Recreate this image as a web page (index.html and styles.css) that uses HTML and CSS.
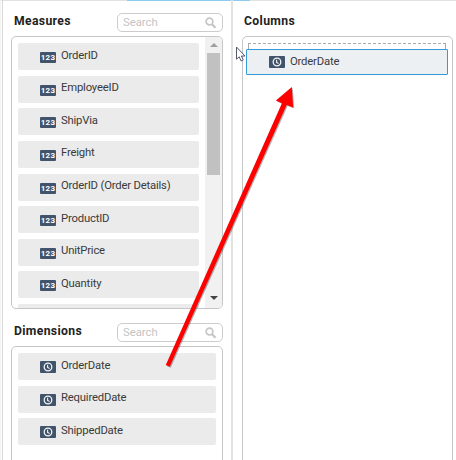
FILE: index.html
```html
<!DOCTYPE html>
<html lang="en">
<head>
<meta charset="utf-8">
<title>Data fields</title>
<link rel="stylesheet" href="styles.css">
</head>
<body>
<svg class="defs" aria-hidden="true">
  <symbol id="clock" viewBox="0 0 16 12">
    <rect width="16" height="12" rx="1" fill="#42536c"/>
    <circle cx="8" cy="6" r="3.8" fill="none" stroke="#f2f4f6" stroke-width="1.3"/>
    <path d="M7.6 3.8v2.6l2 1" fill="none" stroke="#f2f4f6" stroke-width="1.1"/>
  </symbol>
  <symbol id="search" viewBox="0 0 12 12">
    <circle cx="4.5" cy="4.5" r="3.4" fill="none" stroke="#c6c6c6" stroke-width="1.7"/>
    <path d="M7 7.2l3.5 3.6" stroke="#c6c6c6" stroke-width="2.2"/>
  </symbol>
</svg>
<main class="app">
  <section class="fields">
    <header class="head"><h2>Measures</h2><div class="search"><span>Search</span><svg><use href="#search"/></svg></div></header>
    <div class="box measures">
      <ul class="list">
        <li><b class="num">123</b><span>OrderID</span></li>
        <li><b class="num">123</b><span>EmployeeID</span></li>
        <li><b class="num">123</b><span>ShipVia</span></li>
        <li><b class="num">123</b><span>Freight</span></li>
        <li><b class="num">123</b><span>OrderID (Order Details)</span></li>
        <li><b class="num">123</b><span>ProductID</span></li>
        <li><b class="num">123</b><span>UnitPrice</span></li>
        <li><b class="num">123</b><span>Quantity</span></li>
        <li></li>
      </ul>
      <div class="scroll"><i class="up"></i><i class="thumb"></i><i class="down"></i></div>
    </div>
    <header class="head second"><h2>Dimensions</h2><div class="search"><span>Search</span><svg><use href="#search"/></svg></div></header>
    <div class="box dimensions">
      <ul class="list">
        <li><svg class="clock"><use href="#clock"/></svg><span>OrderDate</span></li>
        <li><svg class="clock"><use href="#clock"/></svg><span>RequiredDate</span></li>
        <li><svg class="clock"><use href="#clock"/></svg><span>ShippedDate</span></li>
      </ul>
    </div>
  </section>
  <section class="columns">
    <header class="head"><h2>Columns</h2></header>
    <div class="box target">
      <div class="slot"></div>
      <div class="drag"><svg class="clock"><use href="#clock"/></svg><span>OrderDate</span></div>
    </div>
  </section>
</main>
<svg class="overlay" viewBox="0 0 456 460">
  <path class="cursor" d="M236.5 47v12.2l2.7-2.4 1.9 4.2 2.2-1-1.9-4h3.6z"/>
  <path class="arrow" d="M165.8 364.9L281.9 103.3l-6-2.8L291.8 87l1.4 20.6-6.5-2.6L169.7 366.7z"/>
</svg>
</body>
</html>
```
FILE: styles.css
```css
* { box-sizing: border-box; }
body {
  margin: 0;
  width: 456px;
  height: 460px;
  overflow: hidden;
  background: #fff;
  color: #3a3a3a;
  font: 11.3px/16px Roboto, sans-serif;
}
.defs { position: absolute; width: 0; height: 0; }
.app {
  display: flex;
  height: 460px;
  border-left: 1px solid #f3f3f3;
  background: linear-gradient(90deg, #e2e2e2 126px, #8dccee 126px 249px, #e2e2e2 249px) 0 0 / 100% 1px no-repeat;
}
.fields {
  width: 231px;
  margin-left: 1px;
  padding: 13px 8px 0;
  border-left: 1px solid #d8d8d8;
  border-right: 2px solid #e2e2e2;
}
.columns { flex: 1; padding: 13px 3px 0 9px; }
.head { display: flex; justify-content: space-between; height: 19px; padding-left: 3px; }
h2 { margin: 0; font-size: 12.2px; line-height: 16px; font-weight: 700; color: #222; letter-spacing: .35px; }
.columns .head { padding-left: 2px; }
.search {
  display: flex;
  align-items: center;
  justify-content: space-between;
  width: 106px;
  height: 19px;
  padding: 0 5px;
  border: 1px solid #ccc;
  border-radius: 5px;
  color: #c4c4c4;
}
.search svg { width: 12px; height: 12px; }
.box { display: flex; margin-top: 4px; border: 1px solid #c6c6c6; border-radius: 5px; overflow: hidden; }
.measures { height: 273px; }
.second { margin-top: 14px; }
.dimensions { height: 130px; }
.list {
  flex: 1;
  display: grid;
  grid-auto-rows: 27px;
  align-content: start;
  gap: 5.65px;
  margin: 0;
  padding: 6px;
  list-style: none;
}
li { display: flex; padding: 0 0 0 22px; border-radius: 2px; background: #ebebeb; gap: 5px; }
li > span { padding-top: 4.5px; }
li > span, .drag span { letter-spacing: -.19px; }
.num {
  width: 16px;
  height: 11px;
  margin-top: 9px;
  border-radius: 1px;
  background: #42536c;
  color: #fff;
  font-size: 8px;
  line-height: 11px;
  text-align: center;
  letter-spacing: .2px;
}
.clock { width: 16px; height: 12px; }
li .clock { margin-top: 8px; }
.scroll { display: flex; flex-direction: column; align-items: center; width: 17px; background: #f1f1f1; }
.up, .down { border: 4px solid transparent; }
.up { margin-top: 2px; border-bottom-color: #a0a0a0; }
.thumb { width: 13px; height: 122px; margin-top: 6px; background: #c1c1c1; }
.down { margin-top: auto; margin-bottom: 4px; border-top-color: #444; }
.target { flex-direction: column; height: 430px; padding: 6px 4px 0 3px; }
.slot { height: 6px; margin: 0 2px; border: 1px dashed #aaa; border-bottom: 0; }
.drag {
  display: flex;
  align-items: center;
  gap: 5px;
  height: 26px;
  padding-left: 22px;
  border: 1px solid #3499db;
  border-radius: 1px;
  background: #ecf0f3;
}
.overlay { position: absolute; inset: 0; width: 456px; height: 460px; pointer-events: none; }
.cursor { fill: #fff; stroke: #555b6b; stroke-width: 1; }
.arrow { fill: #f00; filter: drop-shadow(1px 1px .6px rgba(0, 0, 0, .3)); }
```
